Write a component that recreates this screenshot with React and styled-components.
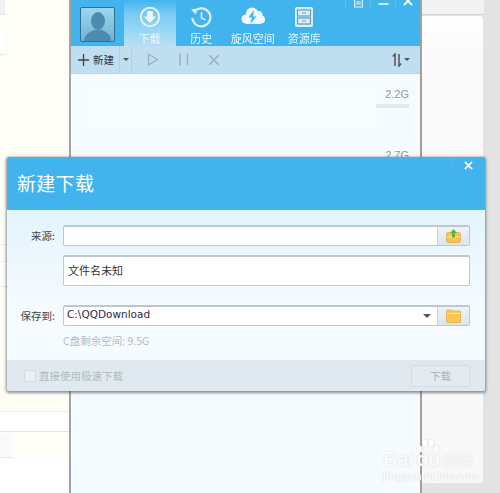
import React from 'react';
import styled, { createGlobalStyle } from 'styled-components';

const GlobalStyle = createGlobalStyle`
  html, body {
    margin: 0;
    padding: 0;
    background: #e3e3e3;
  }
  * {
    box-sizing: border-box;
  }
  body {
    font-family: "Noto Sans CJK SC", "Liberation Sans", sans-serif;
  }
`;

const Screen = styled.div`
  position: relative;
  display: flex;
  width: 500px;
  height: 493px;
  overflow: hidden;
  background: #e3e3e3;
`;

/* page behind the download window */
const LeftPage = styled.div`
  display: flex;
  flex-direction: column;
  width: 69px;
  flex: none;
  background: #fffef6;
`;

const LeftStub = styled.div`
  width: ${(p) => p.$w || 5}px;
  height: ${(p) => p.$h}px;
  margin-top: ${(p) => p.$mt || 0}px;
  background: ${(p) => p.$bg || '#fff'};
  border-bottom: 1px solid #e8e8e4;
`;

const LeftBand = styled.div`
  height: ${(p) => p.$h}px;
  background: ${(p) => p.$bg || '#fff'};
  border-bottom: 1px solid ${(p) => p.$line || '#eeeeea'};
`;

const LeftRest = styled.div`
  flex: 1;
  background: #fff;
`;

const RightPage = styled.div`
  display: flex;
  flex-direction: column;
  flex: none;
  width: 78px;
`;

const RightStrip = styled.div`
  height: 15px;
  width: 62px;
  background: #f2f2f2;
  border-bottom: 1px solid #d2d2d2;
`;

const RightCard = styled.div`
  width: 61px;
  height: 467px;
  margin-top: 1px;
  background: linear-gradient(#ffffff, #fafafa 40px, #f8f8f8);
  border-radius: 0 4px 0 0;
`;

const Window = styled.div`
  display: flex;
  flex-direction: column;
  width: 353px;
  flex: none;
  border-left: 2px solid #a4a4a4;
  border-right: 2px solid #a0a0a0;
  background: linear-gradient(#e5f5fc, #f5fbff 60px);
`;

const TitleBar = styled.div`
  display: flex;
  height: 46px;
  padding-left: 9px;
  background: #41b4ee;
`;

const Avatar = styled.div`
  width: 35px;
  height: 35px;
  margin-top: 7px;
  border: 1px solid #2f6f90;
  border-radius: 2px;
  overflow: hidden;
  background: linear-gradient(#9ed6ee, #6fb3d4);
`;

const Tabs = styled.div`
  display: flex;
  margin-left: 9px;
`;

const Tab = styled.div`
  display: flex;
  flex-direction: column;
  align-items: center;
  width: 51.5px;
  height: 46px;
  padding-top: 6px;
  background: ${(p) =>
    p.$active ? 'linear-gradient(rgba(255,255,255,0) 0, rgba(255,255,255,.3) 14px, #b5e0f6 100%)' : 'none'};
`;

const TabLabel = styled.span`
  margin-top: 3px;
  font-size: 11px;
  line-height: 14px;
  white-space: nowrap;
  color: #fff;
  opacity: ${(p) => (p.$active ? 0.75 : 0.9)};
`;

const WinControls = styled.div`
  display: flex;
  margin-left: auto;
  align-items: flex-start;
  height: 9px;
`;

const WinControl = styled.div`
  display: flex;
  justify-content: center;
  width: 25px;
  height: 9px;
  border-left: 1px solid #5cbdee;
`;

const Toolbar = styled.div`
  display: flex;
  align-items: center;
  height: 28px;
  background: #bfdff0;
  border-bottom: 1px solid #b3d6e8;
`;

const NewButton = styled.div`
  display: flex;
  align-items: center;
  width: 48px;
  height: 100%;
  padding-left: 7px;
  gap: 4px;
  font-size: 10.5px;
  color: #333;
`;

const CaretCell = styled.div`
  display: flex;
  align-items: center;
  justify-content: center;
  width: 13px;
  height: 100%;
  border-left: 1px solid #b2d3e4;
  border-right: 1px solid #b2d3e4;
`;

const Caret = styled.span`
  width: 0;
  height: 0;
  border-left: 3px solid transparent;
  border-right: 3px solid transparent;
  border-top: 3px solid #555;
`;

const ToolIcons = styled.div`
  display: flex;
  align-items: center;
  gap: 18.5px;
  margin-left: 15px;
`;

const SortButton = styled.div`
  display: flex;
  align-items: center;
  gap: 2px;
  margin-left: auto;
  margin-right: 10px;
`;

const TaskList = styled.div`
  display: flex;
  flex-direction: column;
  padding: 13px 11px 0;
`;

const TaskRow = styled.div`
  display: flex;
  height: 61px;
`;

const TaskName = styled.div`
  flex: 1;
  background: linear-gradient(#f7fcff, #f7fcff 60%, rgba(247, 252, 255, 0));
`;

const TaskMeta = styled.div`
  display: flex;
  flex-direction: column;
  width: 33px;
`;

const TaskSize = styled.span`
  font-family: "Liberation Sans", sans-serif;
  font-size: 11px;
  line-height: 14px;
  text-align: right;
  color: #999;
`;

const TaskBar = styled.div`
  height: 4px;
  margin-top: 3px;
  background: #e3eaee;
`;

/* dialog */
const Dialog = styled.div`
  position: absolute;
  left: 7px;
  top: 157px;
  display: flex;
  flex-direction: column;
  width: 478px;
  height: 234px;
  border-radius: 2px;
  overflow: hidden;
  box-shadow: 0 1px 3px 1px rgba(60, 70, 80, 0.6);
`;

const DialogHead = styled.div`
  display: flex;
  align-items: flex-start;
  justify-content: space-between;
  height: 53px;
  background: #41b4ee;
`;

const DialogTitle = styled.h1`
  margin: 11px 0 0 10px;
  font-size: 19px;
  line-height: 30px;
  font-weight: 400;
  letter-spacing: 0.3px;
  color: #fff;
`;

const DialogClose = styled.div`
  display: flex;
  align-items: center;
  justify-content: center;
  width: 32px;
  height: 14px;
  margin-right: 1px;
  padding-top: 2px;
  border-left: 1px solid #5ab5e4;
`;

const DialogBody = styled.div`
  display: flex;
  flex-direction: column;
  flex: 1;
  padding: 15px 15px 0 0;
  background: linear-gradient(#e3f4fc, #f6fbff 100px);
`;

const FormRow = styled.div`
  display: flex;
  align-items: center;
  gap: 8px;
  margin-top: ${(p) => p.$mt || 0}px;
`;

const Label = styled.label`
  width: 48px;
  flex: none;
  font-size: 10.5px;
  text-align: right;
  white-space: nowrap;
  color: #444;
`;

const Field = styled.div`
  display: flex;
  align-items: center;
  flex: 1;
  height: ${(p) => p.$h}px;
  background: #fff;
  border: 1px solid #bcc7cf;
  border-top-width: 2px;
  border-radius: 2px;
  overflow: hidden;
`;

const FieldText = styled.span`
  flex: 1;
  padding: 0 0 2px 4px;
  font-size: 11px;
  color: #333;
`;

const PathText = styled(FieldText)`
  padding-left: 3px;
  padding-bottom: 5px;
  font-family: "DejaVu Sans", sans-serif;
  font-size: 10.5px;
  color: #2b2b4a;
`;

const FieldButton = styled.div`
  display: flex;
  align-items: center;
  justify-content: center;
  width: 32px;
  height: 100%;
  background: linear-gradient(#eef4f8, #d9e5ee);
  border-left: 1px solid #c6d1d9;
`;

const FieldCaret = styled.span`
  width: 0;
  height: 0;
  margin-right: 6px;
  border-left: 4px solid transparent;
  border-right: 4px solid transparent;
  border-top: 4px solid #555;
`;

const Hint = styled.div`
  margin: 8px 0 0 56px;
  font-size: 10.5px;
  line-height: 14px;
  color: #b4bbc0;
`;

const DialogFoot = styled.div`
  display: flex;
  align-items: center;
  justify-content: space-between;
  height: 31px;
  padding: 0 15px 0 17px;
  background: #e0e9ef;
`;

const CheckRow = styled.div`
  display: flex;
  align-items: center;
  gap: 3px;
  font-size: 10.5px;
  color: #b2bbc1;
`;

const CheckBox = styled.span`
  width: 12px;
  height: 12px;
  background: #eaf0f4;
  border: 1px solid #d2dbe1;
  border-radius: 2px;
`;

const StartButton = styled.div`
  display: flex;
  align-items: center;
  justify-content: center;
  width: 59px;
  height: 22px;
  font-size: 10.5px;
  color: #a9b3ba;
  background: #e3ebf0;
  border: 1px solid #d3dde3;
  border-radius: 2px;
`;

/* watermark over the corner */
const Watermark = styled.div`
  position: absolute;
  left: 383px;
  top: 450px;
  width: 100px;
  color: rgba(255, 255, 255, 0.9);
  text-shadow: 0 0 1.5px rgba(175, 180, 185, 0.55);
`;

const MarkLine = styled.div`
  display: flex;
  align-items: baseline;
  gap: 2px;
  font-family: "Liberation Sans", sans-serif;
  font-size: 20px;
  font-weight: 700;
  line-height: 19px;
  white-space: nowrap;
`;

const MarkCn = styled.span`
  margin-left: 1px;
  font-family: "Noto Sans CJK SC", sans-serif;
  font-size: 15px;
  font-weight: 400;
`;

const MarkUrl = styled.div`
  font-family: "Liberation Sans", sans-serif;
  font-size: 11px;
  line-height: 14px;
  font-weight: 700;
`;

const Paw = styled.svg`
  position: absolute;
  left: 32px;
  top: -11px;
  filter: drop-shadow(0 0 1px rgba(175, 180, 185, 0.5));
`;

const AvatarArt = () => (
  <svg width="33" height="33" viewBox="0 0 33 33">
    <ellipse cx="17" cy="13" rx="7" ry="9" fill="#4d8cae" />
    <path d="M3 33c0-7 6-9 10-11h8c4 2 9 4 9 11z" fill="#4d8cae" />
  </svg>
);

const DownloadIcon = () => (
  <svg width="22" height="22" viewBox="0 0 22 22">
    <circle cx="11" cy="11" r="9.2" fill="none" stroke="#e4f2f9" strokeWidth="2" />
    <path d="M8.2 5h5.6v5.5H17L11 17 5 10.5h3.2z" fill="#f0f8fc" />
  </svg>
);

const HistoryIcon = () => (
  <svg width="22" height="22" viewBox="0 0 22 22">
    <path d="M5 5a9 9 0 1 1-2.6 7" fill="none" stroke="#dcedf6" strokeWidth="2.2" />
    <path d="M1 3.5 7 2.5 6 8.5z" fill="#dcedf6" />
    <path d="M11.5 6v6l4 2" fill="none" stroke="#dcedf6" strokeWidth="1.6" />
  </svg>
);

const CloudIcon = () => (
  <svg width="26" height="22" viewBox="0 0 26 22">
    <g fill="#eef8fd">
      <circle cx="6" cy="13" r="4.5" />
      <circle cx="12" cy="7.5" r="6" />
      <circle cx="18.5" cy="9" r="4" />
      <circle cx="21" cy="13.5" r="4" />
      <rect x="6" y="12" width="15" height="6" />
    </g>
    <path d="M14 4 8.5 11.5H12L10 18l6.5-7.5H13z" fill="#41b4ee" />
  </svg>
);

const LibraryIcon = () => (
  <svg width="20" height="22" viewBox="0 0 20 22">
    <rect x="1" y="1" width="18" height="20" rx="2" fill="#dcf0fa" />
    <rect x="3.5" y="4" width="13" height="6" fill="none" stroke="#5b9dbd" strokeWidth="1.2" />
    <rect x="3.5" y="12" width="13" height="6" fill="none" stroke="#5b9dbd" strokeWidth="1.2" />
    <path d="M8 7h4M8 15h4" stroke="#5b9dbd" strokeWidth="1.2" />
  </svg>
);

const PlusIcon = () => (
  <svg width="11" height="12" viewBox="0 0 11 12">
    <path d="M5.5 0v12M0 6h11" stroke="#444" strokeWidth="1.3" />
  </svg>
);

const PlayIcon = () => (
  <svg width="12" height="13" viewBox="0 0 12 13">
    <path d="M1.5 1.2 10.5 6.5 1.5 11.8z" fill="none" stroke="#97b3c3" strokeWidth="1.3" />
  </svg>
);

const PauseIcon = () => (
  <svg width="12" height="13" viewBox="0 0 12 13">
    <path d="M2 .5v12M9.5 .5v12" stroke="#97b3c3" strokeWidth="1.5" />
  </svg>
);

const StopIcon = () => (
  <svg width="12" height="12" viewBox="0 0 12 12">
    <path d="M1 1l10 10M11 1 1 11" stroke="#97b3c3" strokeWidth="1.6" />
  </svg>
);

const SortIcon = () => (
  <svg width="10" height="14" viewBox="0 0 10 14">
    <path d="M3 13V1L.8 3.5M7 1v12l2.2-2.5" fill="none" stroke="#555" strokeWidth="1.5" />
  </svg>
);

const NoteIcon = () => (
  <svg width="9" height="9" viewBox="0 0 9 9">
    <path d="M.6 -2h7.8v9H.6z" fill="none" stroke="#e8f5fc" strokeWidth="1.1" />
    <path d="M2 2h5M2 4h5" stroke="#e8f5fc" strokeWidth="1" />
  </svg>
);

const MinusIcon = () => (
  <svg width="11" height="9" viewBox="0 0 11 9">
    <path d="M.5 4h10" stroke="#f2f9fd" strokeWidth="1.6" />
  </svg>
);

const CloseGlyph = styled.svg`
  margin-top: ${(p) => p.$y || 0}px;
`;

const CloseIcon = ({ size = 10, y = 0 }) => (
  <CloseGlyph width={size} height={size} viewBox="0 0 10 10" $y={y}>
    <path d="M1 1l8 8M9 1 1 9" stroke="#fff" strokeWidth="1.8" />
  </CloseGlyph>
);

const UploadBoxIcon = () => (
  <svg width="15" height="14" viewBox="0 0 15 14">
    <rect x=".5" y="3.5" width="14" height="10" rx="2" fill="#fbc24e" stroke="#dd9b2c" strokeWidth=".6" />
    <path d="M.8 8h13.4" stroke="#fde7a8" strokeWidth="1" />
    <path d="M7.5 0 11 4H9v4.5H6V4H4z" fill="#62b52e" />
  </svg>
);

const FolderIcon = () => (
  <svg width="15" height="14" viewBox="0 0 15 14">
    <path d="M.5 2a1 1 0 0 1 1-1h4l1 1h7a1 1 0 0 1 1 1v9.5a1 1 0 0 1-1 1h-12a1 1 0 0 1-1-1z" fill="#fcc64f" stroke="#dc9e30" strokeWidth=".6" />
    <path d="M1 4.5h13" stroke="#fff0c4" strokeWidth="1.2" />
  </svg>
);

const tabs = [
  { label: '下载', icon: <DownloadIcon />, active: true },
  { label: '历史', icon: <HistoryIcon /> },
  { label: '旋风空间', icon: <CloudIcon /> },
  { label: '资源库', icon: <LibraryIcon /> },
];

const tasks = ['2.2G', '2.7G'];

export default function App() {
  return (
    <Screen>
      <GlobalStyle />

      <LeftPage>
        <LeftStub $h={15} $bg="#f1f1f1" />
        <LeftStub $h={25} $mt={15} />
        <LeftBand $h={190} $bg="#fffef6" />
        <LeftBand $h={17} $bg="#fffef6" />
        <LeftBand $h={25} />
        <LeftBand $h={125} $bg="#fffef6" $line="#f0f0ea" />
        <LeftBand $h={20} $line="#e6e6e6" />
        <LeftStub $w={13} $h={24} $mt={2} $bg="#fafafa" />
        <LeftRest />
      </LeftPage>

      <Window>
        <TitleBar>
          <Avatar>
            <AvatarArt />
          </Avatar>
          <Tabs>
            {tabs.map((tab) => (
              <Tab key={tab.label} $active={tab.active}>
                {tab.icon}
                <TabLabel $active={tab.active}>{tab.label}</TabLabel>
              </Tab>
            ))}
          </Tabs>
          <WinControls>
            <WinControl>
              <NoteIcon />
            </WinControl>
            <WinControl>
              <MinusIcon />
            </WinControl>
            <WinControl>
              <CloseIcon size={10} y={-4} />
            </WinControl>
          </WinControls>
        </TitleBar>

        <Toolbar>
          <NewButton>
            <PlusIcon />
            新建
          </NewButton>
          <CaretCell>
            <Caret />
          </CaretCell>
          <ToolIcons>
            <PlayIcon />
            <PauseIcon />
            <StopIcon />
          </ToolIcons>
          <SortButton>
            <SortIcon />
            <Caret />
          </SortButton>
        </Toolbar>

        <TaskList>
          {tasks.map((size) => (
            <TaskRow key={size}>
              <TaskName />
              <TaskMeta>
                <TaskSize>{size}</TaskSize>
                <TaskBar />
              </TaskMeta>
            </TaskRow>
          ))}
        </TaskList>
      </Window>

      <RightPage>
        <RightStrip />
        <RightCard />
      </RightPage>

      <Dialog>
        <DialogHead>
          <DialogTitle>新建下载</DialogTitle>
          <DialogClose>
            <CloseIcon size={9} />
          </DialogClose>
        </DialogHead>

        <DialogBody>
          <FormRow>
            <Label>来源:</Label>
            <Field $h={21}>
              <FieldText />
              <FieldButton>
                <UploadBoxIcon />
              </FieldButton>
            </Field>
          </FormRow>
          <FormRow $mt={9}>
            <Label />
            <Field $h={31}>
              <FieldText>文件名未知</FieldText>
            </Field>
          </FormRow>
          <FormRow $mt={19}>
            <Label>保存到:</Label>
            <Field $h={21}>
              <PathText>C:\QQDownload</PathText>
              <FieldCaret />
              <FieldButton>
                <FolderIcon />
              </FieldButton>
            </Field>
          </FormRow>
          <Hint>C盘剩余空间: 9.5G</Hint>
        </DialogBody>

        <DialogFoot>
          <CheckRow>
            <CheckBox />
            直接使用极速下载
          </CheckRow>
          <StartButton>下载</StartButton>
        </DialogFoot>
      </Dialog>

      <Watermark>
        <Paw width="24" height="26" viewBox="0 0 24 26" fill="currentColor">
          <ellipse cx="5" cy="10" rx="2.5" ry="3.2" />
          <ellipse cx="10" cy="4" rx="2.5" ry="3.2" />
          <ellipse cx="16" cy="4" rx="2.5" ry="3.2" />
          <ellipse cx="21" cy="10" rx="2.5" ry="3.2" />
        </Paw>
        <MarkLine>
          <span>Bai</span>
          <span>du</span>
          <MarkCn>经验</MarkCn>
        </MarkLine>
        <MarkUrl>jingyan.baidu.com</MarkUrl>
      </Watermark>
    </Screen>
  );
}
